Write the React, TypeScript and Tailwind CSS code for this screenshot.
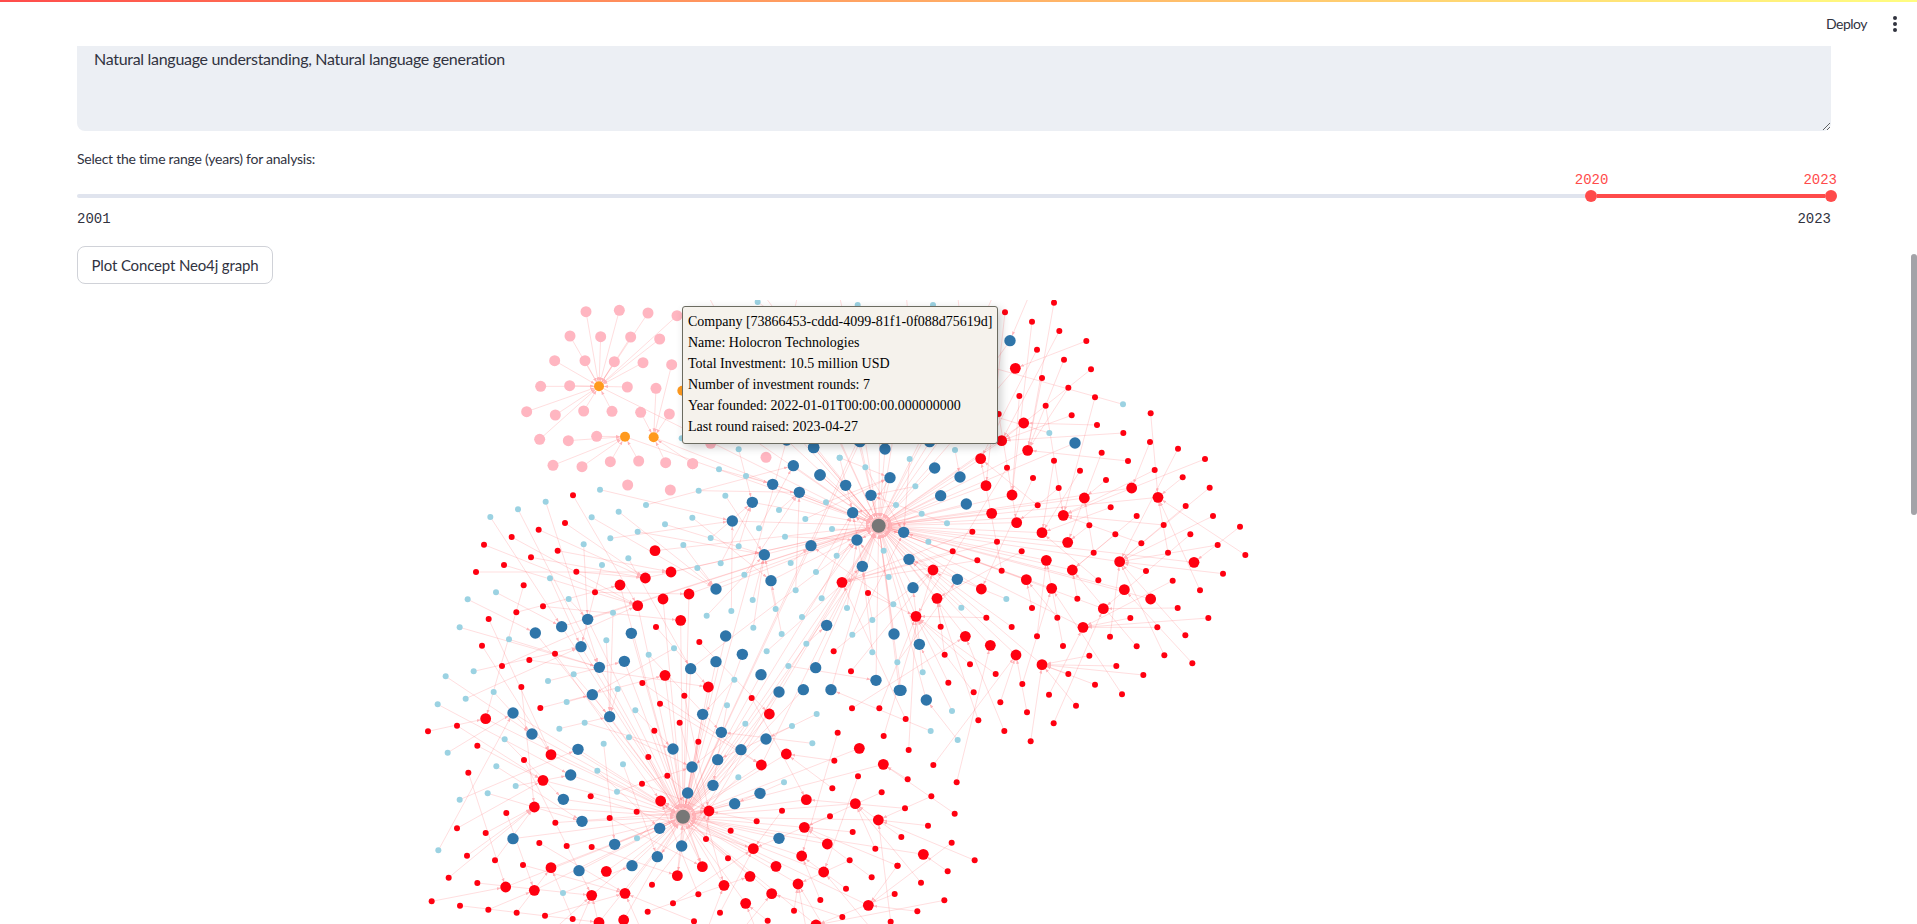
import React from "react";

type Pt = [number, number];
type Edge = { a: Pt; b: Pt; r: number };

// helpers: node positions were read off 3x crops, so they are kept in crop pixels
const at = (ox: number, oy: number, pts: number[][]): Pt[] => pts.map(([x, y]) => [ox + x / 3, oy + y / 3]);

const hubs: Pt[] = [[878.7, 525.7], [683, 816.7]];

const lightBlue: Pt[] = [
  ...at(400, 480, [[600,29],[437,65],[354,88],[271,111],[575,112],[656,95],[738,75],[795,133],[713,155],[631,175],[551,193],[877,113],[896,32],[976,47],[932,174],[850,195],[1016,199],[1077,145],[1137,90],[1216,117],[1278,67],[1296,147],[1155,170],[1172,249],[962,250],[892,264],[1033,284],[685,235],[606,255],[450,295],[288,337],[203,358],[506,357],[639,398],[179,442],[327,478],[619,481],[746,524],[822,505],[920,407],[994,393],[1058,360],[1127,387],[1187,331],[1248,276],[1310,227],[1265,355],[1341,384],[1206,411],[1060,443],[1145,462],[1219,491],[1100,514],[1165,558],[1003,599],[981,676],[1036,731],[1176,738],[1250,702],[1237,790],[1015,892],[1152,907],[221,574],[137,589],[521,583],[444,603],[281,636],[197,656],[113,673],[500,666],[653,627],[706,691],[554,728],[478,746],[687,772],[611,791],[314,778],[143,818],[669,853],[592,872],[289,859],[347,918],[263,940],[179,959],[651,935],[711,1075],[115,1111],[489,1239],[1417,420],[1466,291],[1451,212],[1480,373],[1357,464],[1417,517],[1492,547],[1488,75]]),
  ...at(800, 300, [[969,313],[748,399],[465,450],[329,477],[119,473],[196,502],[346,559],[365,641],[441,670],[385,725],[619,897],[484,923],[456,1233],[392,1293],[473,1320],[368,1117]]),
  ...at(660, 430, [[236,58],[177,118],[258,138],[539,83],[65,25]]),
  ...at(660, 290, [[293,36],[593,45],[819,45]]),
];

const darkBlue: Pt[] = [
  ...at(400, 480, [[1057,67],[997,123],[1118,13],[1198,37],[1337,16],[1413,46],[1358,98],[1371,180],[1233,197],[1093,224],[1113,302],[948,327],[1387,259],[1280,436],[1482,462],[977,468],[1027,523],[948,545],[1083,584],[872,566],[1137,636],[1210,629],[1293,629],[1247,563],[1428,601],[1498,631],[563,418],[485,440],[406,459],[543,500],[694,460],[673,544],[598,562],[577,644],[629,710],[339,699],[396,762],[534,808],[819,807],[908,703],[964,757],[1098,777],[1023,809],[953,839],[876,861],[512,885],[939,916],[863,939],[1080,940],[1004,971],[490,958],[546,1024],[779,1045],[339,1076],[644,1093],[845,1098],[772,1130],[696,1157],[537,1172],[1137,1075]]),
  ...at(800, 300, [[630,122],[825,429],[480,531],[422,587],[404,504],[499,612],[311,697],[327,778],[472,838],[339,863],[358,1033],[303,1171],[379,1200],[41,442],[255,447],[60,525],[270,533],[180,425],[389,425]]),
  ...at(660, 430, [[461,53],[400,107],[480,135],[380,30],[594,30]]),
  // sitting behind the tooltip
  [730, 340], [790, 330], [850, 345], [910, 335], [760, 395], [820, 400], [880, 390], [940, 400], [965, 360],
];

const redSmall: Pt[] = [
  ...at(400, 480, [[519,46],[495,129],[416,149],[335,171],[252,194],[473,212],[393,232],[312,255],[228,276],[529,275],[371,316],[585,337],[429,379],[349,397],[266,417],[768,441],[898,486],[246,497],[465,521],[388,540],[306,558],[1301,514],[1353,574],[364,621],[727,609],[853,647],[1055,654],[421,684],[780,671],[171,737],[84,754],[839,728],[1356,685],[1438,685],[763,752],[895,785],[232,797],[1313,758],[1451,768],[372,840],[745,831],[1303,842],[205,878],[802,887],[1374,889],[726,911],[572,949],[1297,925],[1445,937],[319,999],[710,995],[1146,992],[629,1014],[466,1028],[1290,1009],[1070,1024],[171,1045],[257,1059],[992,1052],[1358,1056],[418,1089],[918,1077],[500,1098],[575,1101],[1426,1106],[201,1127],[984,1135],[285,1141],[369,1155],[1349,1141],[146,1193],[232,1209],[1415,1192],[756,1214],[1338,1226],[95,1264],[180,1277],[265,1289],[895,1243],[1484,1242],[1261,1260],[819,1270],[350,1298],[435,1307],[743,1295],[960,1298],[518,1317],[1182,1292],[1327,1311],[882,1324],[1103,1322],[1472,1325],[1404,339],[1492,1157]]),
  ...at(800, 300, [[762,8],[615,37],[696,65],[778,93],[859,123],[711,149],[792,179],[873,208],[726,234],[805,263],[885,292],[658,288],[737,317],[815,346],[891,375],[596,342],[1052,340],[970,399],[1050,426],[1134,446],[905,458],[1215,477],[984,483],[762,482],[621,503],[1064,510],[840,512],[699,534],[1148,532],[918,540],[1229,563],[776,564],[1157,618],[932,622],[713,616],[1239,648],[1010,648],[868,676],[1091,675],[517,695],[1171,703],[946,703],[1320,680],[1253,735],[1024,730],[591,725],[458,754],[1104,758],[881,758],[665,754],[1336,765],[532,781],[1038,813],[605,812],[1269,821],[1118,842],[895,841],[1200,871],[832,896],[1133,924],[696,924],[559,953],[772,953],[991,954],[1225,954],[635,981],[422,980],[1072,982],[711,1009],[1156,1006],[930,1010],[1010,1039],[789,1038],[434,1064],[868,1067],[1093,1066],[510,1093],[949,1098],[1177,1090],[587,1122],[805,1122],[1030,1125],[445,1148],[885,1154],[667,1152],[521,1177],[747,1184],[966,1183],[601,1207],[828,1217],[681,1237],[535,1261],[761,1270],[613,1293],[692,1324],[317,1257],[326,1350]]),
  ...at(680, 720, [[683,178],[754,229],[824,281],[744,317],[664,351],[815,368],[884,421],[803,454],[723,488],[793,541],[712,574],[653,437],[760,135],[830,187],[675,265]]),
];

const redBig: Pt[] = [
  ...at(400, 480, [[765,212],[813,276],[736,294],[660,315],[867,342],[789,357],[713,377],[842,421],[1326,307],[795,586],[925,621],[1108,702],[257,716],[1378,805],[1159,822],[453,824],[1084,855],[1450,853],[429,901],[1219,959],[782,963],[403,981],[1366,971],[927,993],[1435,1020],[1213,1042],[1282,1092],[1060,1106],[1205,1128],[453,1163],[1128,1159],[907,1160],[619,1174],[832,1187],[1271,1176],[1050,1189],[1194,1212],[972,1216],[317,1221],[403,1231],[1115,1241],[575,1246],[675,1240],[1037,1270],[1405,1276],[597,1327],[671,1320],[1248,1335]]),
  ...at(800, 300, [[646,205],[671,369],[605,422],[683,451],[542,476],[558,557],[636,585],[995,564],[853,594],[1074,592],[575,640],[790,646],[650,668],[726,698],[803,727],[739,781],[959,785],[1182,787],[399,810],[817,810],[679,839],[544,867],[755,865],[973,869],[1052,897],[411,895],[910,926],[348,949],[849,982],[496,1009],[571,1036],[648,1065],[726,1094]]),
  ...at(680, 720, [[730,403]]),
];

const pink: Pt[] = [
  ...at(500, 290, [[258,65],[358,61],[444,69],[531,77],[210,138],[302,140],[392,141],[479,147],[164,212],[255,212],[343,215],[429,218],[515,224],[122,289],[209,287],[382,291],[468,295],[80,365],[166,375],[251,363],[336,364],[422,367],[508,372],[119,448],[205,452],[290,439],[159,526],[246,530],[331,515],[416,513],[497,518],[578,521],[383,585],[511,600]]),
  ...at(660, 430, [[98,101],[318,82],[152,40]]),
];

const orange: Pt[] = at(500, 290, [[297,289],[375,440],[461,442],[547,302]]);

// nodes cut off by the frame, only their edges show
const offTop: Pt[] = [[700, 280], [745, 270], [800, 285], [835, 275], [905, 282], [955, 272], [1000, 280], [1040, 270]];
const offBottom: Pt[] = [[520, 960], [570, 945], [610, 970], [650, 950], [690, 975], [730, 945], [770, 965], [810, 950], [850, 970], [885, 945]];

let seed = 42;
const rand = () => {
  seed = (seed * 16807) % 2147483647;
  return seed / 2147483647;
};

const dist = (a: Pt, b: Pt) => Math.hypot(a[0] - b[0], a[1] - b[1]);

// a child hangs off a parent that lies nearer the hub than it does
const pickParents = (kids: Pt[], parents: Pt[], r: number, spread: number): Edge[] =>
  kids.map((a) => {
    const hub = dist(a, hubs[0]) < dist(a, hubs[1]) ? hubs[0] : hubs[1];
    const inner = parents.filter((p) => dist(p, hub) < dist(a, hub) - 8);
    const sorted = [...(inner.length ? inner : parents)].sort((p, q) => dist(a, p) - dist(a, q));
    const pick = Math.min(Math.floor(rand() * spread), sorted.length - 1);
    return { a, b: sorted[pick], r };
  });

const toHubs = (kids: Pt[]): Edge[] =>
  kids.flatMap((a) => {
    const [near, far] = [...hubs].sort((p, q) => dist(a, p) - dist(a, q));
    const out: Edge[] = [{ a, b: near, r: 9 }];
    if (rand() < 0.16 && dist(a, far) < 420) out.push({ a, b: far, r: 9 });
    return out;
  });

const edges: Edge[] = [
  ...pickParents(lightBlue, darkBlue, 5.5, 7),
  ...pickParents(offTop, darkBlue, 5.5, 3),
  ...pickParents(redSmall, redBig, 5, 7),
  ...pickParents(offBottom, redBig, 5, 4),
  ...pink.slice(0, 32).map((a): Edge => {
    const b = [...orange.slice(0, 3)].sort((p, q) => dist(a, p) - dist(a, q))[0];
    return { a, b, r: 5 };
  }),
  ...toHubs(darkBlue),
  ...toHubs(redBig),
  ...toHubs(orange),
];

const shorten = ({ a, b, r }: Edge) => {
  const d = dist(a, b) || 1;
  return { x2: b[0] - ((b[0] - a[0]) / d) * r, y2: b[1] - ((b[1] - a[1]) / d) * r };
};

const Dots = ({ pts, r, fill }: { pts: Pt[]; r: number; fill: string }) => (
  <g fill={fill}>
    {pts.map(([x, y], i) => (
      <circle key={i} cx={x} cy={y} r={r} />
    ))}
  </g>
);

const tooltipLines = [
  "Company [73866453-cddd-4099-81f1-0f088d75619d]",
  "Name: Holocron Technologies",
  "Total Investment: 10.5 million USD",
  "Number of investment rounds: 7",
  "Year founded: 2022-01-01T00:00:00.000000000",
  "Last round raised: 2023-04-27",
];

const Graph = () => (
  <svg width="1917" height="640" viewBox="0 300 1917 640" className="block">
    <defs>
      <marker id="arrow" markerWidth="4" markerHeight="4" refX="4" refY="2" orient="auto" markerUnits="userSpaceOnUse">
        <path d="M0 0.5L4 2L0 3.5z" fill="#ffb3b8" />
      </marker>
    </defs>
    <g stroke="#ff5a60" strokeOpacity="0.2" strokeWidth="1" fill="none">
      {edges.map((e, i) => (
        <line key={i} x1={e.a[0]} y1={e.a[1]} {...shorten(e)} markerEnd="url(#arrow)" />
      ))}
    </g>
    <Dots pts={pink} r={5.5} fill="#ffb6c1" />
    <Dots pts={orange} r={5} fill="#ff9a1e" />
    <Dots pts={lightBlue} r={3} fill="#9bd2e2" />
    <Dots pts={darkBlue} r={5.7} fill="#2f75a9" />
    <Dots pts={redSmall} r={3} fill="#ff0010" />
    <Dots pts={redBig} r={5.4} fill="#ff0010" />
    <Dots pts={hubs} r={9} fill="#ffc2c5" />
    <Dots pts={hubs} r={7} fill="#777777" />
  </svg>
);

export default function App() {
  return (
    <div className="relative h-[924px] overflow-hidden bg-white font-['Lato','Noto_Sans',sans-serif] text-[#31333f]">
      <header className="h-[46px] bg-white">
        <div className="h-0.5 bg-gradient-to-r from-[#ff4b4b] to-[#fffd80]" />
        <div className="flex h-[44px] items-center justify-end pr-2.5">
          <span className="text-sm tracking-[-0.5px]">Deploy</span>
          <svg width="24" height="24" viewBox="0 0 24 24" className="ml-4" fill="#31333f">
            <circle cx="12" cy="6" r="2" />
            <circle cx="12" cy="12" r="2" />
            <circle cx="12" cy="18" r="2" />
          </svg>
        </div>
      </header>

      <main className="pl-[77px] pr-[86px]">
        <textarea
          readOnly
          defaultValue="Natural language understanding, Natural language generation"
          className="block h-[85px] w-full rounded-b-lg bg-[#eceff4] px-[17px] pt-0.5 text-base leading-[22px] tracking-[-0.3px] outline-none"
        />

        <label className="mt-[18px] block text-sm leading-5 tracking-[-0.25px]">Select the time range (years) for analysis:</label>

        <div className="-mr-1.5 font-['Liberation_Mono',monospace] text-sm leading-5">
          <div className="flex justify-end gap-[195px] pt-px text-[#ff4b4b]">
            <span>2020</span>
            <span>2023</span>
          </div>
          <div className="flex h-3 items-center">
            <div className="h-1 flex-1 rounded-l bg-[#e0e4ee]" />
            <div className="size-3 rounded-full bg-[#ff4b4b]" />
            <div className="h-1 w-[228px] bg-[#ff4b4b]" />
            <div className="size-3 rounded-full bg-[#ff4b4b]" />
          </div>
          <div className="mr-1.5 mt-[7px] flex justify-between">
            <span>2001</span>
            <span>2023</span>
          </div>
        </div>

        <button className="mt-[17px] block h-[38px] w-[196px] rounded-lg border border-[#d0d2d8] bg-white text-[15px] tracking-[-0.15px]">
          Plot Concept Neo4j graph
        </button>
      </main>

      <section className="relative mt-4 h-[624px] overflow-hidden">
        <Graph />
        <div className="absolute left-[682px] top-[6px] h-[138px] w-[316px] rounded-[3px] border border-[#6b6b60] bg-[#f5f2ec] px-[5px] py-[4px] font-['Liberation_Serif',serif] text-sm leading-[21px] text-black shadow-[3px_3px_10px_rgba(0,0,0,0.2)]">
          {tooltipLines.map((line) => (
            <div key={line} className="whitespace-nowrap">{line}</div>
          ))}
        </div>
      </section>

      <div className="absolute right-0 top-[254px] h-[261px] w-1.5 rounded-[3px] bg-[#a3a3a8]" />
    </div>
  );
}
